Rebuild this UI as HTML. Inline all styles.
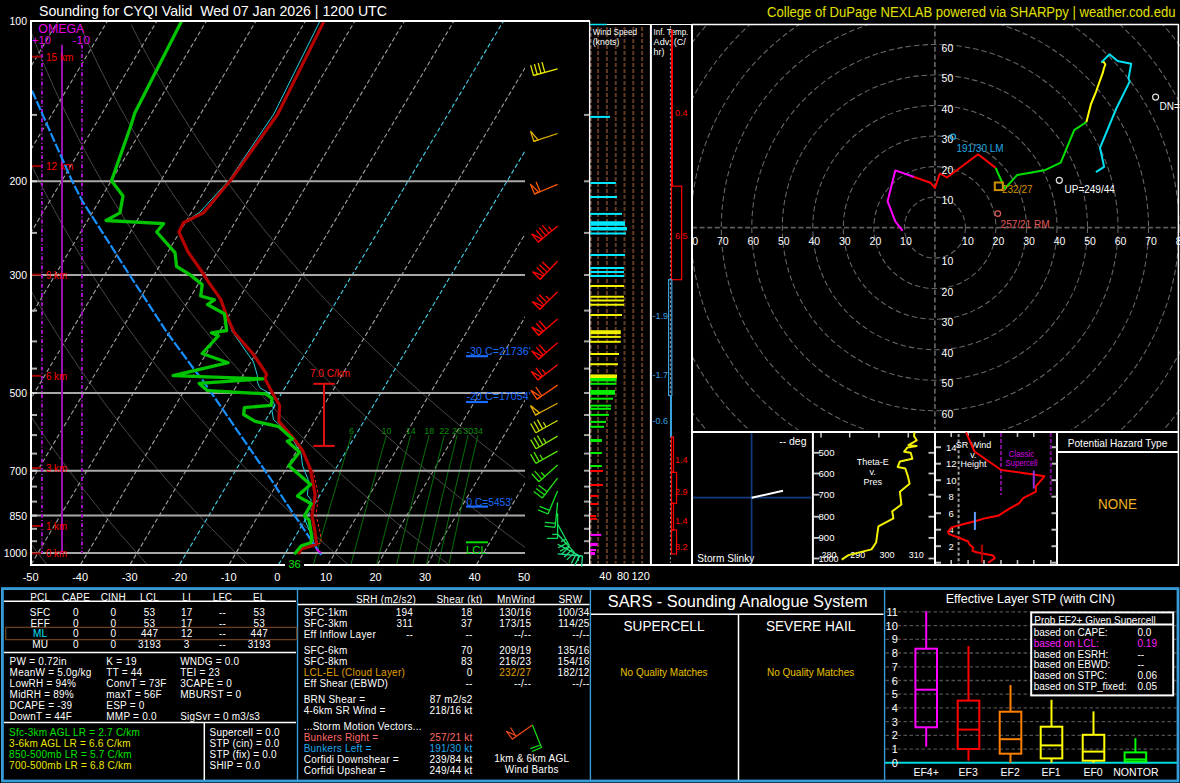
<!DOCTYPE html>
<html><head><meta charset="utf-8"><title>Sounding</title>
<style>html,body{margin:0;padding:0;background:#000;width:1180px;height:783px;overflow:hidden}
svg{display:block} text{font-family:"Liberation Sans",sans-serif;white-space:pre}</style></head>
<body><svg width="1180" height="783" viewBox="0 0 1180 783">
<rect width="1180" height="783" fill="#000"/>
<text x="39" y="16" fill="#fff" font-size="15" textLength="348" lengthAdjust="spacingAndGlyphs">Sounding for CYQI Valid  Wed 07 Jan 2026 | 1200 UTC</text>
<text x="767" y="17" fill="#e0e000" font-size="14" textLength="408.6" lengthAdjust="spacingAndGlyphs">College of DuPage NEXLAB powered via SHARPpy | weather.cod.edu</text>
<defs><clipPath id="skc"><rect x="32" y="22" width="493" height="542"/></clipPath><clipPath id="hodc"><rect x="693" y="25" width="487" height="405"/></clipPath></defs>
<g clip-path="url(#skc)">
<polyline points="46.8,564.5 42.1,558.5 37.4,552.5 32.8,546.5 28.3,540.5 23.8,534.5 19.4,528.5 15.1,522.5 10.8,516.5 6.5,510.5 2.4,504.5 -1.8,498.5 -5.8,492.5 -9.8,486.5 -13.8,480.5 -17.7,474.5 -21.5,468.5 -25.3,462.5 -29,456.5 -32.7,450.5 -36.3,444.5 -39.9,438.5 -43.4,432.5 -46.9,426.5 -50.3,420.5 -53.7,414.5 -57,408.5 -60.2,402.5 -63.5,396.5 -66.6,390.5 -69.7,384.5 -72.8,378.5 -75.8,372.5 -78.7,366.5 -81.7,360.5 -84.5,354.5 -87.3,348.5 -90.1,342.5 -92.8,336.5 -95.5,330.5 -98.1,324.5 -100.7,318.5 -103.3,312.5 -105.8,306.5 -108.2,300.5 -110.6,294.5 -113,288.5 -115.3,282.5 -117.6,276.5 -119.8,270.5 -122,264.5 -124.1,258.5 -126.2,252.5 -128.3,246.5 -130.3,240.5 -132.3,234.5 -134.2,228.5 -136.1,222.5 -137.9,216.5 -139.8,210.5 -141.5,204.5 -143.3,198.5 -145,192.5 -146.6,186.5 -148.2,180.5 -149.8,174.5 -151.3,168.5 -152.9,162.5 -154.3,156.5 -155.7,150.5 -157.1,144.5 -158.5,138.5 -159.8,132.5 -161.1,126.5 -162.3,120.5 -163.5,114.5 -164.7,108.5 -165.8,102.5 -167,96.5 -168,90.5 -169.1,84.5 -170.1,78.5 -171,72.5 -172,66.5 -172.9,60.5 -173.7,54.5 -174.6,48.5 -175.4,42.5 -176.1,36.5 -176.9,30.5 -177.6,24.5" fill="none" stroke="#484848" stroke-width="1" stroke-linejoin="round" />
<polyline points="147.2,564.5 141.8,558.5 136.4,552.5 131,546.5 125.8,540.5 120.6,534.5 115.5,528.5 110.4,522.5 105.4,516.5 100.5,510.5 95.6,504.5 90.8,498.5 86,492.5 81.3,486.5 76.7,480.5 72.1,474.5 67.6,468.5 63.2,462.5 58.8,456.5 54.5,450.5 50.2,444.5 46,438.5 41.8,432.5 37.7,426.5 33.7,420.5 29.7,414.5 25.8,408.5 21.9,402.5 18.1,396.5 14.3,390.5 10.6,384.5 7,378.5 3.4,372.5 -0.2,366.5 -3.7,360.5 -7.1,354.5 -10.5,348.5 -13.8,342.5 -17.1,336.5 -20.4,330.5 -23.5,324.5 -26.7,318.5 -29.8,312.5 -32.8,306.5 -35.8,300.5 -38.7,294.5 -41.6,288.5 -44.5,282.5 -47.3,276.5 -50,270.5 -52.7,264.5 -55.4,258.5 -58,252.5 -60.5,246.5 -63.1,240.5 -65.5,234.5 -68,228.5 -70.3,222.5 -72.7,216.5 -75,210.5 -77.2,204.5 -79.4,198.5 -81.6,192.5 -83.7,186.5 -85.8,180.5 -87.9,174.5 -89.9,168.5 -91.8,162.5 -93.7,156.5 -95.6,150.5 -97.4,144.5 -99.2,138.5 -101,132.5 -102.7,126.5 -104.4,120.5 -106,114.5 -107.6,108.5 -109.2,102.5 -110.7,96.5 -112.2,90.5 -113.6,84.5 -115,78.5 -116.4,72.5 -117.8,66.5 -119.1,60.5 -120.3,54.5 -121.6,48.5 -122.7,42.5 -123.9,36.5 -125,30.5 -126.1,24.5" fill="none" stroke="#484848" stroke-width="1" stroke-linejoin="round" />
<polyline points="247.6,564.5 241.4,558.5 235.3,552.5 229.2,546.5 223.2,540.5 217.3,534.5 211.5,528.5 205.7,522.5 200,516.5 194.4,510.5 188.8,504.5 183.3,498.5 177.9,492.5 172.5,486.5 167.2,480.5 162,474.5 156.8,468.5 151.7,462.5 146.6,456.5 141.7,450.5 136.7,444.5 131.9,438.5 127.1,432.5 122.4,426.5 117.7,420.5 113.1,414.5 108.6,408.5 104.1,402.5 99.7,396.5 95.3,390.5 91,384.5 86.7,378.5 82.5,372.5 78.4,366.5 74.3,360.5 70.3,354.5 66.4,348.5 62.4,342.5 58.6,336.5 54.8,330.5 51.1,324.5 47.4,318.5 43.7,312.5 40.1,306.5 36.6,300.5 33.1,294.5 29.7,288.5 26.4,282.5 23,276.5 19.8,270.5 16.5,264.5 13.4,258.5 10.3,252.5 7.2,246.5 4.2,240.5 1.2,234.5 -1.7,228.5 -4.6,222.5 -7.4,216.5 -10.2,210.5 -12.9,204.5 -15.6,198.5 -18.3,192.5 -20.9,186.5 -23.4,180.5 -25.9,174.5 -28.4,168.5 -30.8,162.5 -33.1,156.5 -35.5,150.5 -37.7,144.5 -40,138.5 -42.2,132.5 -44.3,126.5 -46.4,120.5 -48.5,114.5 -50.5,108.5 -52.5,102.5 -54.5,96.5 -56.4,90.5 -58.2,84.5 -60,78.5 -61.8,72.5 -63.6,66.5 -65.3,60.5 -66.9,54.5 -68.5,48.5 -70.1,42.5 -71.7,36.5 -73.2,30.5 -74.7,24.5" fill="none" stroke="#484848" stroke-width="1" stroke-linejoin="round" />
<polyline points="348,564.5 341.1,558.5 334.2,552.5 327.4,546.5 320.7,540.5 314.1,534.5 307.5,528.5 301,522.5 294.6,516.5 288.3,510.5 282,504.5 275.8,498.5 269.7,492.5 263.7,486.5 257.7,480.5 251.8,474.5 245.9,468.5 240.2,462.5 234.5,456.5 228.9,450.5 223.3,444.5 217.8,438.5 212.4,432.5 207,426.5 201.7,420.5 196.5,414.5 191.3,408.5 186.2,402.5 181.2,396.5 176.2,390.5 171.3,384.5 166.5,378.5 161.7,372.5 157,366.5 152.3,360.5 147.7,354.5 143.2,348.5 138.7,342.5 134.3,336.5 129.9,330.5 125.6,324.5 121.4,318.5 117.2,312.5 113.1,306.5 109,300.5 105,294.5 101.1,288.5 97.2,282.5 93.3,276.5 89.5,270.5 85.8,264.5 82.1,258.5 78.5,252.5 74.9,246.5 71.4,240.5 67.9,234.5 64.5,228.5 61.1,222.5 57.8,216.5 54.6,210.5 51.4,204.5 48.2,198.5 45.1,192.5 42,186.5 39,180.5 36.1,174.5 33.1,168.5 30.3,162.5 27.4,156.5 24.7,150.5 22,144.5 19.3,138.5 16.6,132.5 14.1,126.5 11.5,120.5 9,114.5 6.6,108.5 4.2,102.5 1.8,96.5 -0.5,90.5 -2.8,84.5 -5,78.5 -7.2,72.5 -9.4,66.5 -11.5,60.5 -13.5,54.5 -15.5,48.5 -17.5,42.5 -19.5,36.5 -21.4,30.5 -23.2,24.5" fill="none" stroke="#484848" stroke-width="1" stroke-linejoin="round" />
<polyline points="448.4,564.5 440.7,558.5 433.1,552.5 425.6,546.5 418.2,540.5 410.8,534.5 403.5,528.5 396.3,522.5 389.2,516.5 382.2,510.5 375.2,504.5 368.4,498.5 361.5,492.5 354.8,486.5 348.2,480.5 341.6,474.5 335.1,468.5 328.7,462.5 322.3,456.5 316,450.5 309.8,444.5 303.7,438.5 297.6,432.5 291.7,426.5 285.7,420.5 279.9,414.5 274.1,408.5 268.4,402.5 262.8,396.5 257.2,390.5 251.7,384.5 246.2,378.5 240.9,372.5 235.6,366.5 230.3,360.5 225.2,354.5 220,348.5 215,342.5 210,336.5 205.1,330.5 200.2,324.5 195.5,318.5 190.7,312.5 186.1,306.5 181.4,300.5 176.9,294.5 172.4,288.5 168,282.5 163.6,276.5 159.3,270.5 155.1,264.5 150.9,258.5 146.7,252.5 142.6,246.5 138.6,240.5 134.7,234.5 130.7,228.5 126.9,222.5 123.1,216.5 119.4,210.5 115.7,204.5 112,198.5 108.4,192.5 104.9,186.5 101.4,180.5 98,174.5 94.6,168.5 91.3,162.5 88,156.5 84.8,150.5 81.6,144.5 78.5,138.5 75.5,132.5 72.4,126.5 69.5,120.5 66.5,114.5 63.7,108.5 60.8,102.5 58,96.5 55.3,90.5 52.6,84.5 50,78.5 47.4,72.5 44.8,66.5 42.3,60.5 39.9,54.5 37.5,48.5 35.1,42.5 32.8,36.5 30.5,30.5 28.2,24.5" fill="none" stroke="#484848" stroke-width="1" stroke-linejoin="round" />
<polyline points="548.8,564.5 540.4,558.5 532.1,552.5 523.8,546.5 515.6,540.5 507.6,534.5 499.6,528.5 491.7,522.5 483.8,516.5 476.1,510.5 468.5,504.5 460.9,498.5 453.4,492.5 446,486.5 438.7,480.5 431.4,474.5 424.3,468.5 417.2,462.5 410.2,456.5 403.2,450.5 396.4,444.5 389.6,438.5 382.9,432.5 376.3,426.5 369.7,420.5 363.3,414.5 356.9,408.5 350.6,402.5 344.3,396.5 338.1,390.5 332,384.5 326,378.5 320,372.5 314.1,366.5 308.3,360.5 302.6,354.5 296.9,348.5 291.3,342.5 285.7,336.5 280.3,330.5 274.8,324.5 269.5,318.5 264.2,312.5 259,306.5 253.9,300.5 248.8,294.5 243.8,288.5 238.8,282.5 233.9,276.5 229.1,270.5 224.3,264.5 219.6,258.5 215,252.5 210.4,246.5 205.9,240.5 201.4,234.5 197,228.5 192.6,222.5 188.4,216.5 184.1,210.5 180,204.5 175.8,198.5 171.8,192.5 167.8,186.5 163.8,180.5 160,174.5 156.1,168.5 152.3,162.5 148.6,156.5 145,150.5 141.3,144.5 137.8,138.5 134.3,132.5 130.8,126.5 127.4,120.5 124.1,114.5 120.7,108.5 117.5,102.5 114.3,96.5 111.1,90.5 108,84.5 105,78.5 102,72.5 99,66.5 96.1,60.5 93.3,54.5 90.5,48.5 87.7,42.5 85,36.5 82.3,30.5 79.7,24.5" fill="none" stroke="#484848" stroke-width="1" stroke-linejoin="round" />
<polyline points="649.3,564.5 640.1,558.5 631,552.5 622,546.5 613.1,540.5 604.3,534.5 595.6,528.5 587,522.5 578.5,516.5 570,510.5 561.7,504.5 553.4,498.5 545.2,492.5 537.2,486.5 529.2,480.5 521.2,474.5 513.4,468.5 505.7,462.5 498,456.5 490.4,450.5 482.9,444.5 475.5,438.5 468.2,432.5 460.9,426.5 453.8,420.5 446.7,414.5 439.7,408.5 432.7,402.5 425.9,396.5 419.1,390.5 412.4,384.5 405.7,378.5 399.2,372.5 392.7,366.5 386.3,360.5 380,354.5 373.7,348.5 367.6,342.5 361.4,336.5 355.4,330.5 349.4,324.5 343.5,318.5 337.7,312.5 332,306.5 326.3,300.5 320.7,294.5 315.1,288.5 309.6,282.5 304.2,276.5 298.9,270.5 293.6,264.5 288.3,258.5 283.2,252.5 278.1,246.5 273.1,240.5 268.1,234.5 263.2,228.5 258.4,222.5 253.6,216.5 248.9,210.5 244.3,204.5 239.7,198.5 235.1,192.5 230.7,186.5 226.3,180.5 221.9,174.5 217.6,168.5 213.4,162.5 209.2,156.5 205.1,150.5 201,144.5 197,138.5 193.1,132.5 189.2,126.5 185.4,120.5 181.6,114.5 177.8,108.5 174.2,102.5 170.5,96.5 167,90.5 163.5,84.5 160,78.5 156.6,72.5 153.2,66.5 149.9,60.5 146.7,54.5 143.5,48.5 140.3,42.5 137.2,36.5 134.2,30.5 131.2,24.5" fill="none" stroke="#484848" stroke-width="1" stroke-linejoin="round" />
<line x1="-513.4" y1="564.5" x2="-189.5" y2="21" stroke="#a0a0a0" stroke-width="1.1" stroke-dasharray="4.5 2.5"/>
<line x1="-463.9" y1="564.5" x2="-140" y2="21" stroke="#a0a0a0" stroke-width="1.1" stroke-dasharray="4.5 2.5"/>
<line x1="-414.4" y1="564.5" x2="-90.5" y2="21" stroke="#a0a0a0" stroke-width="1.1" stroke-dasharray="4.5 2.5"/>
<line x1="-364.9" y1="564.5" x2="-41" y2="21" stroke="#a0a0a0" stroke-width="1.1" stroke-dasharray="4.5 2.5"/>
<line x1="-315.4" y1="564.5" x2="8.5" y2="21" stroke="#a0a0a0" stroke-width="1.1" stroke-dasharray="4.5 2.5"/>
<line x1="-265.9" y1="564.5" x2="58" y2="21" stroke="#a0a0a0" stroke-width="1.1" stroke-dasharray="4.5 2.5"/>
<line x1="-216.4" y1="564.5" x2="107.5" y2="21" stroke="#a0a0a0" stroke-width="1.1" stroke-dasharray="4.5 2.5"/>
<line x1="-166.9" y1="564.5" x2="157" y2="21" stroke="#a0a0a0" stroke-width="1.1" stroke-dasharray="4.5 2.5"/>
<line x1="-117.4" y1="564.5" x2="206.5" y2="21" stroke="#a0a0a0" stroke-width="1.1" stroke-dasharray="4.5 2.5"/>
<line x1="-67.9" y1="564.5" x2="256" y2="21" stroke="#a0a0a0" stroke-width="1.1" stroke-dasharray="4.5 2.5"/>
<line x1="-18.4" y1="564.5" x2="305.5" y2="21" stroke="#a0a0a0" stroke-width="1.1" stroke-dasharray="4.5 2.5"/>
<line x1="31.1" y1="564.5" x2="355" y2="21" stroke="#a0a0a0" stroke-width="1.1" stroke-dasharray="4.5 2.5"/>
<line x1="80.6" y1="564.5" x2="404.5" y2="21" stroke="#a0a0a0" stroke-width="1.1" stroke-dasharray="4.5 2.5"/>
<line x1="130.1" y1="564.5" x2="454" y2="21" stroke="#a0a0a0" stroke-width="1.1" stroke-dasharray="4.5 2.5"/>
<line x1="179.6" y1="564.5" x2="503.5" y2="21" stroke="#48d0e8" stroke-width="1.1" stroke-dasharray="4.5 2.5"/>
<line x1="229.1" y1="564.5" x2="553" y2="21" stroke="#a0a0a0" stroke-width="1.1" stroke-dasharray="4.5 2.5"/>
<line x1="278.6" y1="564.5" x2="602.5" y2="21" stroke="#48d0e8" stroke-width="1.1" stroke-dasharray="4.5 2.5"/>
<line x1="328.1" y1="564.5" x2="652" y2="21" stroke="#a0a0a0" stroke-width="1.1" stroke-dasharray="4.5 2.5"/>
<line x1="377.6" y1="564.5" x2="701.5" y2="21" stroke="#a0a0a0" stroke-width="1.1" stroke-dasharray="4.5 2.5"/>
<line x1="427.1" y1="564.5" x2="751" y2="21" stroke="#a0a0a0" stroke-width="1.1" stroke-dasharray="4.5 2.5"/>
<line x1="476.6" y1="564.5" x2="800.5" y2="21" stroke="#a0a0a0" stroke-width="1.1" stroke-dasharray="4.5 2.5"/>
<line x1="526.1" y1="564.5" x2="850" y2="21" stroke="#a0a0a0" stroke-width="1.1" stroke-dasharray="4.5 2.5"/>
<polyline points="351.4,435.1 340.7,470.7 331.6,501.6 323.6,528.8 316.7,553.1 313.4,564.5" fill="none" stroke="#087008" stroke-width="1" stroke-linejoin="round" />
<polyline points="386.5,435.1 376.5,470.7 367.9,501.6 360.5,528.8 354,553.1 350.9,564.5" fill="none" stroke="#087008" stroke-width="1" stroke-linejoin="round" />
<polyline points="410.7,435.1 401.1,470.7 392.9,501.6 385.8,528.8 379.6,553.1 376.8,564.5" fill="none" stroke="#087008" stroke-width="1" stroke-linejoin="round" />
<polyline points="429.2,435.1 419.9,470.7 412.1,501.6 405.3,528.8 399.4,553.1 396.6,564.5" fill="none" stroke="#087008" stroke-width="1" stroke-linejoin="round" />
<polyline points="444.3,435.1 435.3,470.7 427.7,501.6 421.2,528.8 415.4,553.1 412.8,564.5" fill="none" stroke="#087008" stroke-width="1" stroke-linejoin="round" />
<polyline points="457.1,435.1 448.4,470.7 441,501.6 434.6,528.8 429.1,553.1 426.5,564.5" fill="none" stroke="#087008" stroke-width="1" stroke-linejoin="round" />
<polyline points="468.2,435.1 459.6,470.7 452.4,501.6 446.3,528.8 440.9,553.1 438.4,564.5" fill="none" stroke="#087008" stroke-width="1" stroke-linejoin="round" />
<polyline points="478,435.1 469.6,470.7 462.6,501.6 456.6,528.8 451.3,553.1 448.9,564.5" fill="none" stroke="#087008" stroke-width="1" stroke-linejoin="round" />
</g>
<text x="351.4" y="434" fill="#0a8a0a" font-size="9" text-anchor="middle" >6</text>
<text x="386.5" y="434" fill="#0a8a0a" font-size="9" text-anchor="middle" >10</text>
<text x="410.7" y="434" fill="#0a8a0a" font-size="9" text-anchor="middle" >14</text>
<text x="429.2" y="434" fill="#0a8a0a" font-size="9" text-anchor="middle" >18</text>
<text x="444.3" y="434" fill="#0a8a0a" font-size="9" text-anchor="middle" >22</text>
<text x="457.1" y="434" fill="#0a8a0a" font-size="9" text-anchor="middle" >26</text>
<text x="468.2" y="434" fill="#0a8a0a" font-size="9" text-anchor="middle" >30</text>
<text x="478" y="434" fill="#0a8a0a" font-size="9" text-anchor="middle" >34</text>
<line x1="32" y1="181.3" x2="525" y2="181.3" stroke="#a8a8a8" stroke-width="2" />
<line x1="32" y1="275" x2="525" y2="275" stroke="#a8a8a8" stroke-width="2" />
<line x1="32" y1="393" x2="525" y2="393" stroke="#a8a8a8" stroke-width="2" />
<line x1="32" y1="470.7" x2="525" y2="470.7" stroke="#a8a8a8" stroke-width="2" />
<line x1="32" y1="515.6" x2="525" y2="515.6" stroke="#a8a8a8" stroke-width="2" />
<line x1="32" y1="553.1" x2="525" y2="553.1" stroke="#a8a8a8" stroke-width="2" />
<line x1="32" y1="114.9" x2="37" y2="114.9" stroke="#b0b0b0" stroke-width="2" />
<line x1="32" y1="181.3" x2="37" y2="181.3" stroke="#d0d0d0" stroke-width="2" />
<line x1="32" y1="232.9" x2="37" y2="232.9" stroke="#b0b0b0" stroke-width="2" />
<line x1="32" y1="275" x2="37" y2="275" stroke="#d0d0d0" stroke-width="2" />
<line x1="32" y1="310.6" x2="37" y2="310.6" stroke="#b0b0b0" stroke-width="2" />
<line x1="32" y1="341.4" x2="37" y2="341.4" stroke="#b0b0b0" stroke-width="2" />
<line x1="32" y1="368.6" x2="37" y2="368.6" stroke="#b0b0b0" stroke-width="2" />
<line x1="32" y1="393" x2="37" y2="393" stroke="#d0d0d0" stroke-width="2" />
<line x1="32" y1="415" x2="37" y2="415" stroke="#b0b0b0" stroke-width="2" />
<line x1="32" y1="435.1" x2="37" y2="435.1" stroke="#b0b0b0" stroke-width="2" />
<line x1="32" y1="453.6" x2="37" y2="453.6" stroke="#b0b0b0" stroke-width="2" />
<line x1="32" y1="470.7" x2="37" y2="470.7" stroke="#d0d0d0" stroke-width="2" />
<line x1="32" y1="486.6" x2="37" y2="486.6" stroke="#b0b0b0" stroke-width="2" />
<line x1="32" y1="501.6" x2="37" y2="501.6" stroke="#b0b0b0" stroke-width="2" />
<line x1="32" y1="515.6" x2="37" y2="515.6" stroke="#d0d0d0" stroke-width="2" />
<line x1="32" y1="528.8" x2="37" y2="528.8" stroke="#b0b0b0" stroke-width="2" />
<line x1="32" y1="541.2" x2="37" y2="541.2" stroke="#b0b0b0" stroke-width="2" />
<line x1="32" y1="553.1" x2="37" y2="553.1" stroke="#d0d0d0" stroke-width="2" />
<line x1="584" y1="114.9" x2="589" y2="114.9" stroke="#a0a0a0" stroke-width="2" />
<line x1="584" y1="181.3" x2="589" y2="181.3" stroke="#a0a0a0" stroke-width="2" />
<line x1="584" y1="232.9" x2="589" y2="232.9" stroke="#a0a0a0" stroke-width="2" />
<line x1="584" y1="275" x2="589" y2="275" stroke="#a0a0a0" stroke-width="2" />
<line x1="584" y1="310.6" x2="589" y2="310.6" stroke="#a0a0a0" stroke-width="2" />
<line x1="584" y1="341.4" x2="589" y2="341.4" stroke="#a0a0a0" stroke-width="2" />
<line x1="584" y1="368.6" x2="589" y2="368.6" stroke="#a0a0a0" stroke-width="2" />
<line x1="584" y1="393" x2="589" y2="393" stroke="#a0a0a0" stroke-width="2" />
<line x1="584" y1="415" x2="589" y2="415" stroke="#a0a0a0" stroke-width="2" />
<line x1="584" y1="435.1" x2="589" y2="435.1" stroke="#a0a0a0" stroke-width="2" />
<line x1="584" y1="453.6" x2="589" y2="453.6" stroke="#a0a0a0" stroke-width="2" />
<line x1="584" y1="470.7" x2="589" y2="470.7" stroke="#a0a0a0" stroke-width="2" />
<line x1="584" y1="486.6" x2="589" y2="486.6" stroke="#a0a0a0" stroke-width="2" />
<line x1="584" y1="501.6" x2="589" y2="501.6" stroke="#a0a0a0" stroke-width="2" />
<line x1="584" y1="515.6" x2="589" y2="515.6" stroke="#a0a0a0" stroke-width="2" />
<line x1="584" y1="528.8" x2="589" y2="528.8" stroke="#a0a0a0" stroke-width="2" />
<line x1="584" y1="541.2" x2="589" y2="541.2" stroke="#a0a0a0" stroke-width="2" />
<line x1="584" y1="553.1" x2="589" y2="553.1" stroke="#a0a0a0" stroke-width="2" />
<text x="27" y="25.2" fill="#fff" font-size="10.5" text-anchor="end" >100</text>
<text x="27" y="185.3" fill="#fff" font-size="10.5" text-anchor="end" >200</text>
<text x="27" y="279" fill="#fff" font-size="10.5" text-anchor="end" >300</text>
<text x="27" y="397" fill="#fff" font-size="10.5" text-anchor="end" >500</text>
<text x="27" y="474.7" fill="#fff" font-size="10.5" text-anchor="end" >700</text>
<text x="27" y="519.6" fill="#fff" font-size="10.5" text-anchor="end" >850</text>
<text x="27" y="557.1" fill="#fff" font-size="10.5" text-anchor="end" >1000</text>
<text x="30.6" y="581.2" fill="#fff" font-size="11" text-anchor="middle" >-50</text>
<text x="80.1" y="581.2" fill="#fff" font-size="11" text-anchor="middle" >-40</text>
<text x="129.6" y="581.2" fill="#fff" font-size="11" text-anchor="middle" >-30</text>
<text x="179.1" y="581.2" fill="#fff" font-size="11" text-anchor="middle" >-20</text>
<text x="228.6" y="581.2" fill="#fff" font-size="11" text-anchor="middle" >-10</text>
<text x="277.3" y="581.2" fill="#fff" font-size="11" text-anchor="middle" >0</text>
<text x="326.1" y="581.2" fill="#fff" font-size="11" text-anchor="middle" >10</text>
<text x="375.6" y="581.2" fill="#fff" font-size="11" text-anchor="middle" >20</text>
<text x="425.1" y="581.2" fill="#fff" font-size="11" text-anchor="middle" >30</text>
<text x="474.6" y="581.2" fill="#fff" font-size="11" text-anchor="middle" >40</text>
<text x="524.1" y="581.2" fill="#fff" font-size="11" text-anchor="middle" >50</text>
<g>
<line x1="62" y1="44.7" x2="62" y2="553" stroke="#9a10b0" stroke-width="2" />
<line x1="42" y1="44.7" x2="42" y2="553" stroke="#a010c0" stroke-width="2" stroke-dasharray="3.9 2.2 1 2.1"/>
<line x1="82" y1="44.7" x2="82" y2="553" stroke="#a010c0" stroke-width="2" stroke-dasharray="3.9 2.2 1 2.1"/>
<text x="38.3" y="33" fill="#e800e8" font-size="12" text-anchor="start" textLength="46" lengthAdjust="spacingAndGlyphs" >OMEGA</text>
<text x="32" y="44" fill="#e800e8" font-size="11" text-anchor="start" textLength="19" lengthAdjust="spacingAndGlyphs" >+10</text>
<text x="72.2" y="44" fill="#e800e8" font-size="11" text-anchor="start" textLength="17.9" lengthAdjust="spacingAndGlyphs" >-10</text>
</g>
<line x1="32" y1="56.7" x2="41" y2="56.7" stroke="#a00000" stroke-width="2" />
<text x="46" y="60.7" fill="#ff0000" font-size="10.5" text-anchor="start" textLength="27.5" lengthAdjust="spacingAndGlyphs" >15 km</text>
<line x1="32" y1="166.1" x2="41" y2="166.1" stroke="#a00000" stroke-width="2" />
<text x="46" y="170.1" fill="#ff0000" font-size="10.5" text-anchor="start" textLength="27.5" lengthAdjust="spacingAndGlyphs" >12 km</text>
<line x1="32" y1="274.6" x2="41" y2="274.6" stroke="#a00000" stroke-width="2" />
<text x="46" y="278.6" fill="#ff0000" font-size="10.5" text-anchor="start" textLength="21" lengthAdjust="spacingAndGlyphs" >9 km</text>
<line x1="32" y1="375.8" x2="41" y2="375.8" stroke="#a00000" stroke-width="2" />
<text x="46" y="379.8" fill="#ff0000" font-size="10.5" text-anchor="start" textLength="21" lengthAdjust="spacingAndGlyphs" >6 km</text>
<line x1="32" y1="468" x2="41" y2="468" stroke="#a00000" stroke-width="2" />
<text x="46" y="472" fill="#ff0000" font-size="10.5" text-anchor="start" textLength="21" lengthAdjust="spacingAndGlyphs" >3 km</text>
<line x1="32" y1="526" x2="41" y2="526" stroke="#a00000" stroke-width="2" />
<text x="46" y="530" fill="#ff0000" font-size="10.5" text-anchor="start" textLength="21" lengthAdjust="spacingAndGlyphs" >1 km</text>
<line x1="32" y1="553.4" x2="41" y2="553.4" stroke="#a00000" stroke-width="2" />
<text x="46" y="557.4" fill="#ff0000" font-size="10.5" text-anchor="start" textLength="21" lengthAdjust="spacingAndGlyphs" >0 km</text>
<polyline points="32,90.7 71.6,180 81.7,200 129,274.1 167.3,332.9 195.5,371.2 202.5,380 271.4,480 284.2,500 321.2,555" fill="none" stroke="#1890ff" stroke-width="2.2" stroke-linejoin="round" stroke-dasharray="9.5 2.1"/>
<polyline points="319.7,21.6 273.8,114 229.2,180 200,212 183.5,222.8 178.9,232 188.1,252 206.5,280 220.6,299.1 226.7,316 232,331.3 253.5,362 257.4,375.7 257.4,381.9 259.7,387.7 268.9,393 275,406 272,410.6 273.5,419.8 281.1,426 293.4,440.5 301,453.6 302.6,465.8 308.7,481 307.4,495.3 311.3,500 304.4,518.3 313.6,541.3 308,548" fill="none" stroke="#20d0e0" stroke-width="1" stroke-linejoin="round" />
<polyline points="313,470 318.5,495.3 316,515.2 320,532 321.5,542.8 303,549" fill="none" stroke="#ff2020" stroke-width="1" stroke-linejoin="round" stroke-dasharray="3 2"/>
<polyline points="323.8,21.6 277.8,114 230.8,180 229.5,181.5 203.4,212.9 183.5,222.8 178.9,232 188.1,252 200.7,270 209.8,283.8 220.6,299.1 226.7,316 234.4,332.8 252.8,353.5 266.6,374.2 265,378.8 272,392.3 279.6,405.3 278.9,421.4 293.4,438.2 302.6,450.5 310.3,468.9 314.9,493.4 315.1,495.3 312,515.2 315.1,532.1 316.6,544.4 301.3,549 298.2,554.3" fill="none" stroke="#b40000" stroke-width="3.2" stroke-linejoin="round" />
<polyline points="181.4,21.6 134.8,113 130.7,126.3 111.5,180.7 123,196 119.9,212.9 106.1,220.5 163.6,223.6 156.7,232 175,252.7 176.6,266.5 189.9,274.6 202.2,284.6 200.7,296 214.4,299.9 207.5,304.5 224.4,313.7 226.7,330.5 211.4,332.8 218.3,335.9 202.2,353.5 228.2,362.7 173.1,375.7 262.7,378.8 199.1,383.4 207.6,390.7 265.8,393.8 272,398.4 271.2,405.3 244.4,407.6 243.6,414.5 255.1,421.4 278.9,426.7 292.6,439 287.3,441.3 299.5,452 288.8,465.8 310.5,484.6 297.5,496.1 311.3,503.8 304.4,516 309,519.8 312,538.2 310.5,542.8 301.3,545.9 294.4,554.3" fill="none" stroke="#00c400" stroke-width="3.3" stroke-linejoin="round" />
<line x1="316" y1="549" x2="321" y2="553" stroke="#e000e0" stroke-width="2" />
<line x1="313.3" y1="383.8" x2="334.8" y2="383.8" stroke="#e01010" stroke-width="2" />
<line x1="324" y1="383.8" x2="324" y2="445.9" stroke="#e01010" stroke-width="2" />
<line x1="313.3" y1="445.9" x2="334.8" y2="445.9" stroke="#e01010" stroke-width="2" />
<text x="330" y="377" fill="#ff1a1a" font-size="10" text-anchor="middle" >7.0 C/km</text>
<text x="466.5" y="355.2" fill="#1a6cff" font-size="10.5" text-anchor="start" textLength="64.2" lengthAdjust="spacingAndGlyphs" >-30 C=21736'</text>
<line x1="466" y1="356.2" x2="488" y2="356.2" stroke="#1a6cff" stroke-width="2.2" />
<text x="466.5" y="400.3" fill="#1a6cff" font-size="10.5" text-anchor="start" textLength="64.2" lengthAdjust="spacingAndGlyphs" >-20 C=17054'</text>
<line x1="466" y1="402" x2="488" y2="402" stroke="#1a6cff" stroke-width="2.2" />
<text x="466.5" y="505.8" fill="#1a6cff" font-size="10.5" text-anchor="start" textLength="46.3" lengthAdjust="spacingAndGlyphs" >0 C=5453'</text>
<line x1="466" y1="506.6" x2="488" y2="506.6" stroke="#1a6cff" stroke-width="2.2" />
<line x1="466" y1="542.3" x2="488" y2="542.3" stroke="#00e000" stroke-width="2" />
<text x="466" y="554" fill="#00e000" font-size="11" text-anchor="start" textLength="20.7" lengthAdjust="spacingAndGlyphs" >LCL</text>
<polyline points="31,565 31,21 590,21" fill="none" stroke="#fff" stroke-width="2"/>
<line x1="30" y1="565" x2="285" y2="565" stroke="#fff" stroke-width="2" />
<line x1="304" y1="565" x2="590" y2="565" stroke="#fff" stroke-width="2" />
<text x="294.5" y="568" fill="#00e000" font-size="11" text-anchor="middle" >36</text>
<path d="M557.6,68.9L533.5,75.5M533.5,75.5l-2.8,-10.3M537.2,74.5l-2.8,-10.3M541,73.4l-2.8,-10.3M544.8,72.4l-2.8,-10.3" stroke="#e6e600" stroke-width="1.3" fill="none"/>
<path d="M557.6,133.5L533.8,141.3" stroke="#e6b000" stroke-width="1.3" fill="none"/>
<path d="M533.8,141.3L530.5,131.1L538.1,139.9Z" stroke="#e6b000" stroke-width="1.3" fill="none" stroke-linejoin="miter"/>
<path d="M557.6,184.3L534.5,194M540.1,191.6l-4.1,-9.9" stroke="#ff5a00" stroke-width="1.3" fill="none"/>
<path d="M534.5,194L530.4,184.1L538.7,192.2Z" stroke="#ff5a00" stroke-width="1.3" fill="none" stroke-linejoin="miter"/>
<path d="M557.6,226.1L538.4,242.1M543,238.3l-6.8,-8.2M546,235.8l-6.8,-8.2M549,233.3l-6.8,-8.2M552,230.8l-3.4,-4.1" stroke="#ff0000" stroke-width="1.3" fill="none"/>
<path d="M538.4,242.1L531.5,233.9L541.8,239.2Z" stroke="#ff0000" stroke-width="1.3" fill="none" stroke-linejoin="miter"/>
<path d="M557.6,261.2L540.2,279.2M544.4,274.9l-7.7,-7.4M547.1,272.1l-7.7,-7.4M549.8,269.2l-7.7,-7.4" stroke="#ff0000" stroke-width="1.3" fill="none"/>
<path d="M540.2,279.2L532.5,271.7L543.3,275.9Z" stroke="#ff0000" stroke-width="1.3" fill="none" stroke-linejoin="miter"/>
<path d="M557.6,291.8L539.8,309.3M544.1,305.1l-7.5,-7.6M546.8,302.4l-7.5,-7.6M549.6,299.7l-3.8,-3.8" stroke="#ff0000" stroke-width="1.3" fill="none"/>
<path d="M539.8,309.3L532.3,301.7L543,306.2Z" stroke="#ff0000" stroke-width="1.3" fill="none" stroke-linejoin="miter"/>
<path d="M557.6,318.9L538.7,335.3M543.3,331.4l-7,-8.1M546.2,328.8l-7,-8.1" stroke="#ff0000" stroke-width="1.3" fill="none"/>
<path d="M538.7,335.3L531.7,327.2L542.1,332.3Z" stroke="#ff0000" stroke-width="1.3" fill="none" stroke-linejoin="miter"/>
<path d="M557.6,342.8L538.7,359.1M543.2,355.2l-7,-8.1M546.2,352.7l-7,-8.1" stroke="#ff0000" stroke-width="1.3" fill="none"/>
<path d="M538.7,359.1L531.7,351L542.1,356.2Z" stroke="#ff0000" stroke-width="1.3" fill="none" stroke-linejoin="miter"/>
<path d="M557.6,364.7L537.8,379.9M542.5,376.3l-6.5,-8.5M545.6,373.9l-3.3,-4.2" stroke="#ff1000" stroke-width="1.3" fill="none"/>
<path d="M537.8,379.9L531.3,371.5L541.4,377.2Z" stroke="#ff1000" stroke-width="1.3" fill="none" stroke-linejoin="miter"/>
<path d="M557.6,385.1L537,399.2M541.9,395.8l-6.1,-8.8" stroke="#ff5000" stroke-width="1.3" fill="none"/>
<path d="M537,399.2L530.9,390.4L540.7,396.7Z" stroke="#ff5000" stroke-width="1.3" fill="none" stroke-linejoin="miter"/>
<path d="M557.6,403.3L535.5,415" stroke="#e6b000" stroke-width="1.3" fill="none"/>
<path d="M535.5,415L530.5,405.6L539.5,412.9Z" stroke="#e6b000" stroke-width="1.3" fill="none" stroke-linejoin="miter"/>
<path d="M557.6,420.5L535.8,432.8M535.8,432.8l-5.2,-9.3M539.2,430.8l-5.2,-9.3M542.6,428.9l-5.2,-9.3M546,427l-2.6,-4.7" stroke="#c8e000" stroke-width="1.3" fill="none"/>
<path d="M557.6,436.1L536.1,448.8M536.1,448.8l-5.4,-9.2M539.4,446.8l-5.4,-9.2M542.8,444.8l-5.4,-9.2M546.1,442.9l-2.7,-4.6" stroke="#80e000" stroke-width="1.3" fill="none"/>
<path d="M557.6,451.1L535.8,463.4M535.8,463.4l-5.2,-9.3M539.2,461.4l-5.2,-9.3M542.6,459.5l-2.6,-4.7" stroke="#50e000" stroke-width="1.3" fill="none"/>
<path d="M557.6,465.1L538.9,481.7M538.9,481.7l-7.1,-8M541.8,479.1l-7.1,-8M544.8,476.5l-3.6,-4" stroke="#30e000" stroke-width="1.3" fill="none"/>
<path d="M557.6,478.2L542.3,498M542.3,498l-8.5,-6.5M544.7,494.9l-8.5,-6.5M547.1,491.8l-8.5,-6.5" stroke="#20e010" stroke-width="1.3" fill="none"/>
<path d="M557.6,490.9L548,514M548,514l-9.9,-4.1M549.5,510.4l-9.9,-4.1" stroke="#10e020" stroke-width="1.3" fill="none"/>
<path d="M557.6,502.4L555.1,527.3M555.1,527.3l-10.6,-1.1M555.5,523.4l-10.6,-1.1" stroke="#10e040" stroke-width="1.3" fill="none"/>
<path d="M557.6,513.3L557.6,538.3M557.6,538.3l-10.7,0M557.6,534.4l-5.3,0" stroke="#10e050" stroke-width="1.3" fill="none"/>
<path d="M557.6,524L569.5,546M569.5,546l-9.4,5.1M567.6,542.6l-9.4,5.1M565.8,539.1l-4.7,2.5" stroke="#10e060" stroke-width="1.3" fill="none"/>
<path d="M557.6,534.3L574.6,552.6M574.6,552.6l-7.8,7.3M572,549.7l-7.8,7.3M569.3,546.9l-7.8,7.3" stroke="#20e070" stroke-width="1.3" fill="none"/>
<path d="M557.6,544.2L579.7,555.9M579.7,555.9l-5,9.5M576.3,554l-5,9.5" stroke="#20e080" stroke-width="1.3" fill="none"/>
<path d="M557.6,553.8L582.5,556M582.5,556l-0.9,10.7M578.6,555.6l-0.5,5.3" stroke="#20e090" stroke-width="1.3" fill="none"/>
<line x1="589.6" y1="21" x2="589.6" y2="565" stroke="#fff" stroke-width="1.3" />
<line x1="590.8" y1="26.9" x2="590.8" y2="564" stroke="#d8a890" stroke-width="1" stroke-dasharray="4 2"/>
<line x1="598.1" y1="26.9" x2="598.1" y2="563.5" stroke="#623a22" stroke-width="2" stroke-dasharray="4 2"/>
<line x1="606.9" y1="26.9" x2="606.9" y2="563.5" stroke="#623a22" stroke-width="2" stroke-dasharray="4 2"/>
<line x1="615.7" y1="26.9" x2="615.7" y2="563.5" stroke="#623a22" stroke-width="2" stroke-dasharray="4 2"/>
<line x1="624.5" y1="26.9" x2="624.5" y2="563.5" stroke="#623a22" stroke-width="2" stroke-dasharray="4 2"/>
<line x1="633.3" y1="26.9" x2="633.3" y2="563.5" stroke="#623a22" stroke-width="2" stroke-dasharray="4 2"/>
<line x1="642.1" y1="26.9" x2="642.1" y2="563.5" stroke="#623a22" stroke-width="2" stroke-dasharray="4 2"/>
<line x1="590" y1="24.5" x2="651" y2="24.5" stroke="#fff" stroke-width="1.2" />
<line x1="650.9" y1="24" x2="650.9" y2="566" stroke="#fff" stroke-width="2" />
<text x="592.7" y="34.5" fill="#fff" font-size="9.5" text-anchor="start" textLength="44.3" lengthAdjust="spacingAndGlyphs" >Wind Speed</text>
<text x="592.7" y="44.5" fill="#fff" font-size="9.5" text-anchor="start" textLength="26.7" lengthAdjust="spacingAndGlyphs" >(knots)</text>
<line x1="590.2" y1="24.5" x2="606.8" y2="24.5" stroke="#00e8ff" stroke-width="1.5" />
<line x1="590.2" y1="116.9" x2="610" y2="116.9" stroke="#00e8ff" stroke-width="2" />
<line x1="590.2" y1="183" x2="615.9" y2="183" stroke="#00e8ff" stroke-width="2" />
<line x1="590.2" y1="197" x2="617" y2="197" stroke="#00e8ff" stroke-width="2" />
<line x1="590.2" y1="213.9" x2="622" y2="213.9" stroke="#00e8ff" stroke-width="2" />
<line x1="590.2" y1="223.4" x2="625" y2="223.4" stroke="#00e8ff" stroke-width="4.5" />
<line x1="590.2" y1="228.7" x2="626.9" y2="228.7" stroke="#00e8ff" stroke-width="3.5" />
<line x1="590.2" y1="233.5" x2="626" y2="233.5" stroke="#00e8ff" stroke-width="2" />
<line x1="590.2" y1="255" x2="625" y2="255" stroke="#00e8ff" stroke-width="2" />
<line x1="590.2" y1="268" x2="624" y2="268" stroke="#00e8ff" stroke-width="2" />
<line x1="590.2" y1="272" x2="624" y2="272" stroke="#00e8ff" stroke-width="2" />
<line x1="590.2" y1="276" x2="624" y2="276" stroke="#00e8ff" stroke-width="2" />
<line x1="590.2" y1="285.9" x2="624" y2="285.9" stroke="#f0f000" stroke-width="2" />
<line x1="590.2" y1="296.8" x2="624" y2="296.8" stroke="#f0f000" stroke-width="2" />
<line x1="590.2" y1="300.6" x2="624" y2="300.6" stroke="#f0f000" stroke-width="2" />
<line x1="590.2" y1="304.8" x2="624" y2="304.8" stroke="#f0f000" stroke-width="2" />
<line x1="590.2" y1="315" x2="622" y2="315" stroke="#f0f000" stroke-width="2" />
<line x1="590.2" y1="332.2" x2="620.8" y2="332.2" stroke="#f0f000" stroke-width="4" />
<line x1="590.2" y1="336.9" x2="620.8" y2="336.9" stroke="#f0f000" stroke-width="2" />
<line x1="590.2" y1="341.8" x2="620.8" y2="341.8" stroke="#f0f000" stroke-width="2" />
<line x1="590.2" y1="354" x2="619" y2="354" stroke="#f0f000" stroke-width="2" />
<line x1="590.2" y1="364.2" x2="618" y2="364.2" stroke="#f0f000" stroke-width="2" />
<line x1="590.2" y1="376.2" x2="617" y2="376.2" stroke="#f0f000" stroke-width="3.6" />
<line x1="590.2" y1="379.7" x2="616.6" y2="379.7" stroke="#00f000" stroke-width="3.4" />
<line x1="590.2" y1="383.8" x2="616.2" y2="383.8" stroke="#00f000" stroke-width="2" />
<line x1="590.2" y1="392.4" x2="615" y2="392.4" stroke="#00f000" stroke-width="4.8" />
<line x1="590.2" y1="398.7" x2="613" y2="398.7" stroke="#00f000" stroke-width="2" />
<line x1="590.2" y1="405.7" x2="611" y2="405.7" stroke="#00f000" stroke-width="2" />
<line x1="590.2" y1="408.8" x2="611" y2="408.8" stroke="#00f000" stroke-width="2" />
<line x1="590.2" y1="414.9" x2="608.9" y2="414.9" stroke="#00f000" stroke-width="2" />
<line x1="590.2" y1="421.9" x2="606" y2="421.9" stroke="#00f000" stroke-width="2" />
<line x1="590.2" y1="426.8" x2="604" y2="426.8" stroke="#00f000" stroke-width="2" />
<line x1="590.2" y1="440.5" x2="601.9" y2="440.5" stroke="#00f000" stroke-width="3" />
<line x1="590.2" y1="453" x2="601.9" y2="453" stroke="#00f000" stroke-width="2" />
<line x1="590.2" y1="466" x2="601.9" y2="466" stroke="#00f000" stroke-width="2" />
<line x1="590.2" y1="471" x2="603" y2="471" stroke="#ff0000" stroke-width="2" />
<line x1="590.2" y1="485" x2="603" y2="485" stroke="#ff0000" stroke-width="2" />
<line x1="590.2" y1="495.9" x2="598.3" y2="495.9" stroke="#ff0000" stroke-width="2" />
<line x1="590.2" y1="504" x2="598.3" y2="504" stroke="#ff0000" stroke-width="2" />
<line x1="590.2" y1="516" x2="596" y2="516" stroke="#ff0000" stroke-width="2" />
<line x1="590.2" y1="518.8" x2="597" y2="518.8" stroke="#ff0000" stroke-width="2" />
<line x1="590.2" y1="534.9" x2="601.2" y2="534.9" stroke="#ff00ff" stroke-width="2" />
<line x1="590.2" y1="544.4" x2="597.6" y2="544.4" stroke="#ff00ff" stroke-width="3" />
<line x1="590.2" y1="550" x2="596" y2="550" stroke="#ff00ff" stroke-width="2" />
<line x1="590.2" y1="553.5" x2="595" y2="553.5" stroke="#ff00ff" stroke-width="3" />
<line x1="589" y1="565" x2="692" y2="565" stroke="#fff" stroke-width="2" />
<text x="605.4" y="580" fill="#fff" font-size="11" text-anchor="middle" >40</text>
<text x="623" y="580" fill="#fff" font-size="11" text-anchor="middle" >80</text>
<text x="640.6" y="580" fill="#fff" font-size="11" text-anchor="middle" >120</text>
<line x1="651" y1="24.5" x2="692" y2="24.5" stroke="#fff" stroke-width="1.2" />
<line x1="692" y1="24" x2="692" y2="566" stroke="#fff" stroke-width="2" />
<line x1="670.4" y1="26" x2="670.4" y2="563" stroke="#9a9a9a" stroke-width="1" stroke-dasharray="2.5 2"/>
<text x="653.6" y="34.5" fill="#fff" font-size="9.5" text-anchor="start" textLength="34.7" lengthAdjust="spacingAndGlyphs" >Inf. Temp.</text>
<text x="653.6" y="44.5" fill="#fff" font-size="9.5" text-anchor="start" textLength="32.3" lengthAdjust="spacingAndGlyphs" >Adv. (C/</text>
<text x="653.6" y="54.5" fill="#fff" font-size="9.5" text-anchor="start" textLength="10.8" lengthAdjust="spacingAndGlyphs" >hr)</text>
<line x1="672" y1="29.8" x2="672" y2="186.2" stroke="#ff0000" stroke-width="2" />
<rect x="671.5" y="186.2" width="10.2" height="93.5" fill="none" stroke="#ff0000" stroke-width="1.2" />
<rect x="668.6" y="279.7" width="3.2" height="115.8" fill="none" stroke="#3aa0e0" stroke-width="1.2" />
<line x1="671" y1="395.5" x2="671" y2="437" stroke="#3aa0e0" stroke-width="2" />
<rect x="671.5" y="437" width="2" height="35.4" fill="none" stroke="#ff0000" stroke-width="1.2" />
<rect x="671.5" y="472.4" width="5.1" height="30.9" fill="none" stroke="#ff0000" stroke-width="1.2" />
<rect x="671.5" y="503.3" width="2" height="26.7" fill="none" stroke="#ff0000" stroke-width="1.2" />
<rect x="671.5" y="530" width="5.1" height="23.9" fill="none" stroke="#ff0000" stroke-width="1.2" />
<text x="687.5" y="115.5" fill="#ff0000" font-size="9" text-anchor="end" >0.4</text>
<text x="687.5" y="238.9" fill="#ff0000" font-size="9" text-anchor="end" >6.5</text>
<text x="687.5" y="462.5" fill="#ff0000" font-size="9" text-anchor="end" >1.4</text>
<text x="687.5" y="494.9" fill="#ff0000" font-size="9" text-anchor="end" >2.9</text>
<text x="687.5" y="523.5" fill="#ff0000" font-size="9" text-anchor="end" >1.4</text>
<text x="687.5" y="549.5" fill="#ff0000" font-size="9" text-anchor="end" >3.2</text>
<text x="668" y="318.5" fill="#3aa0e0" font-size="9" text-anchor="end" >-1.9</text>
<text x="668" y="377.9" fill="#3aa0e0" font-size="9" text-anchor="end" >-1.7</text>
<text x="668" y="423.5" fill="#3aa0e0" font-size="9" text-anchor="end" >-0.6</text>
<g clip-path="url(#hodc)">
<circle cx="934.9" cy="227.6" r="30.5" fill="none" stroke="#686868" stroke-width="1.05" stroke-dasharray="5.5 3"/>
<circle cx="934.9" cy="227.6" r="61" fill="none" stroke="#686868" stroke-width="1.05" stroke-dasharray="5.5 3"/>
<circle cx="934.9" cy="227.6" r="91.6" fill="none" stroke="#686868" stroke-width="1.05" stroke-dasharray="5.5 3"/>
<circle cx="934.9" cy="227.6" r="122.1" fill="none" stroke="#686868" stroke-width="1.05" stroke-dasharray="5.5 3"/>
<circle cx="934.9" cy="227.6" r="152.6" fill="none" stroke="#686868" stroke-width="1.05" stroke-dasharray="5.5 3"/>
<circle cx="934.9" cy="227.6" r="183.1" fill="none" stroke="#686868" stroke-width="1.05" stroke-dasharray="5.5 3"/>
<circle cx="934.9" cy="227.6" r="213.6" fill="none" stroke="#686868" stroke-width="1.05" stroke-dasharray="5.5 3"/>
<circle cx="934.9" cy="227.6" r="244.2" fill="none" stroke="#686868" stroke-width="1.05" stroke-dasharray="5.5 3"/>
<circle cx="934.9" cy="227.6" r="274.7" fill="none" stroke="#686868" stroke-width="1.05" stroke-dasharray="5.5 3"/>
<circle cx="934.9" cy="227.6" r="305.2" fill="none" stroke="#686868" stroke-width="1.05" stroke-dasharray="5.5 3"/>
<circle cx="934.9" cy="227.6" r="335.7" fill="none" stroke="#686868" stroke-width="1.05" stroke-dasharray="5.5 3"/>
<line x1="934.9" y1="24" x2="934.9" y2="431" stroke="#5c5c5c" stroke-width="1.8" stroke-dasharray="5 2.6"/>
<line x1="692" y1="227.6" x2="1180" y2="227.6" stroke="#5c5c5c" stroke-width="1.8" stroke-dasharray="5 2.6"/>
<text x="947.4" y="204.1" fill="#fff" font-size="10.5" text-anchor="middle" >10</text>
<text x="947.4" y="265.1" fill="#fff" font-size="10.5" text-anchor="middle" >10</text>
<text x="947.4" y="173.6" fill="#fff" font-size="10.5" text-anchor="middle" >20</text>
<text x="947.4" y="295.6" fill="#fff" font-size="10.5" text-anchor="middle" >20</text>
<text x="947.4" y="143" fill="#fff" font-size="10.5" text-anchor="middle" >30</text>
<text x="947.4" y="326.2" fill="#fff" font-size="10.5" text-anchor="middle" >30</text>
<text x="947.4" y="112.5" fill="#fff" font-size="10.5" text-anchor="middle" >40</text>
<text x="947.4" y="356.7" fill="#fff" font-size="10.5" text-anchor="middle" >40</text>
<text x="947.4" y="82" fill="#fff" font-size="10.5" text-anchor="middle" >50</text>
<text x="947.4" y="387.2" fill="#fff" font-size="10.5" text-anchor="middle" >50</text>
<text x="947.4" y="51.5" fill="#fff" font-size="10.5" text-anchor="middle" >60</text>
<text x="947.4" y="417.7" fill="#fff" font-size="10.5" text-anchor="middle" >60</text>
<text x="905.9" y="244.6" fill="#fff" font-size="10.5" text-anchor="middle" >10</text>
<text x="967.9" y="244.6" fill="#fff" font-size="10.5" text-anchor="middle" >10</text>
<text x="875.4" y="244.6" fill="#fff" font-size="10.5" text-anchor="middle" >20</text>
<text x="998.4" y="244.6" fill="#fff" font-size="10.5" text-anchor="middle" >20</text>
<text x="844.8" y="244.6" fill="#fff" font-size="10.5" text-anchor="middle" >30</text>
<text x="1029" y="244.6" fill="#fff" font-size="10.5" text-anchor="middle" >30</text>
<text x="814.3" y="244.6" fill="#fff" font-size="10.5" text-anchor="middle" >40</text>
<text x="1059.5" y="244.6" fill="#fff" font-size="10.5" text-anchor="middle" >40</text>
<text x="783.8" y="244.6" fill="#fff" font-size="10.5" text-anchor="middle" >50</text>
<text x="1090" y="244.6" fill="#fff" font-size="10.5" text-anchor="middle" >50</text>
<text x="753.3" y="244.6" fill="#fff" font-size="10.5" text-anchor="middle" >60</text>
<text x="1120.5" y="244.6" fill="#fff" font-size="10.5" text-anchor="middle" >60</text>
<text x="722.8" y="244.6" fill="#fff" font-size="10.5" text-anchor="middle" >70</text>
<text x="1151" y="244.6" fill="#fff" font-size="10.5" text-anchor="middle" >70</text>
<text x="692.2" y="244.6" fill="#fff" font-size="10.5" text-anchor="middle" >80</text>
<text x="1181.6" y="244.6" fill="#fff" font-size="10.5" text-anchor="middle" >80</text>
<polyline points="902.6,230.8 895.3,221.3 887.6,201.3 895.3,170.4 914.2,177" fill="none" stroke="#ff00ff" stroke-width="2" stroke-linejoin="round" />
<polyline points="914.2,177 930.4,182.7 934.9,187.9 939.9,173.5 947,177.5 978.1,154.2 995.7,167.9" fill="none" stroke="#ff0000" stroke-width="2" stroke-linejoin="round" />
<polyline points="995.7,167.9 998.1,173.5 1002,182 1004.8,188.7 1017.3,174.9 1044.4,170.3 1060.7,162.7 1074.2,130.2 1086.4,122" fill="none" stroke="#00e000" stroke-width="2" stroke-linejoin="round" />
<polyline points="1086.4,122 1091,104 1095.9,92.2 1098,86 1102.7,73.2 1104,68 1105.4,64.5 1103.5,61.5 1101.4,62.4" fill="none" stroke="#ffff00" stroke-width="2" stroke-linejoin="round" />
<polyline points="1101.4,62.4 1109.5,54.2 1117.6,61 1131.2,63.7 1128.5,78.6 1129.8,81.4 1116.3,108.5 1100,147.8 1104.1,166.8 1095.9,172.2" fill="none" stroke="#00e0f0" stroke-width="2" stroke-linejoin="round" />
<rect x="994.8" y="182.5" width="8" height="7.6" fill="none" stroke="#d09000" stroke-width="2" />
<text x="1002" y="193" fill="#d09000" font-size="10" text-anchor="start" >232/27</text>
<circle cx="952.9" cy="136.7" r="2.6" fill="none" stroke="#20a8e0" stroke-width="1.2"/>
<text x="956.4" y="152" fill="#20a8e0" font-size="10" text-anchor="start" >191/30 LM</text>
<circle cx="997.8" cy="213.6" r="2.8" fill="none" stroke="#e05a5a" stroke-width="1.2"/>
<text x="1000.6" y="228" fill="#e05a5a" font-size="10" text-anchor="start" >257/21 RM</text>
<circle cx="1059.3" cy="180.3" r="3" fill="none" stroke="#e0e0e0" stroke-width="1.2"/>
<text x="1064.5" y="192.5" fill="#fff" font-size="10" text-anchor="start" >UP=249/44</text>
<circle cx="1155.6" cy="97.1" r="3" fill="none" stroke="#e0e0e0" stroke-width="1.2"/>
<text x="1159.5" y="110" fill="#fff" font-size="10" text-anchor="start" >DN=</text>
</g>
<line x1="692" y1="24.5" x2="1179" y2="24.5" stroke="#fff" stroke-width="1.3" />
<line x1="1178.4" y1="24" x2="1178.4" y2="566" stroke="#fff" stroke-width="1.5" />
<line x1="692" y1="432" x2="1179" y2="432" stroke="#fff" stroke-width="2" />
<line x1="692" y1="565" x2="1179" y2="565" stroke="#fff" stroke-width="2" />
<line x1="812.9" y1="432" x2="812.9" y2="566" stroke="#fff" stroke-width="2" />
<line x1="935" y1="432" x2="935" y2="566" stroke="#fff" stroke-width="2" />
<line x1="1057" y1="432" x2="1057" y2="566" stroke="#fff" stroke-width="2" />
<line x1="751.6" y1="433" x2="751.6" y2="564" stroke="#123c82" stroke-width="1.7" />
<line x1="693" y1="497.7" x2="811" y2="497.7" stroke="#123c82" stroke-width="1.7" />
<line x1="751.6" y1="497.7" x2="783" y2="490.8" stroke="#fff" stroke-width="2" />
<text x="806.5" y="445" fill="#fff" font-size="11" text-anchor="end" textLength="27.3" lengthAdjust="spacingAndGlyphs" >-- deg</text>
<text x="697.3" y="562" fill="#fff" font-size="11" text-anchor="start" textLength="57" lengthAdjust="spacingAndGlyphs" >Storm Slinky</text>
<line x1="814" y1="452.8" x2="819.5" y2="452.8" stroke="#c8c8c8" stroke-width="1.8" />
<line x1="928.5" y1="452.8" x2="934" y2="452.8" stroke="#c8c8c8" stroke-width="1.8" />
<text x="818.5" y="456.3" fill="#fff" font-size="9" text-anchor="start" textLength="16" lengthAdjust="spacingAndGlyphs" >500</text>
<line x1="814" y1="473.5" x2="819.5" y2="473.5" stroke="#c8c8c8" stroke-width="1.8" />
<line x1="928.5" y1="473.5" x2="934" y2="473.5" stroke="#c8c8c8" stroke-width="1.8" />
<text x="818.5" y="477" fill="#fff" font-size="9" text-anchor="start" textLength="16" lengthAdjust="spacingAndGlyphs" >600</text>
<line x1="814" y1="494.7" x2="819.5" y2="494.7" stroke="#c8c8c8" stroke-width="1.8" />
<line x1="928.5" y1="494.7" x2="934" y2="494.7" stroke="#c8c8c8" stroke-width="1.8" />
<text x="818.5" y="498.2" fill="#fff" font-size="9" text-anchor="start" textLength="16" lengthAdjust="spacingAndGlyphs" >700</text>
<line x1="814" y1="516.7" x2="819.5" y2="516.7" stroke="#c8c8c8" stroke-width="1.8" />
<line x1="928.5" y1="516.7" x2="934" y2="516.7" stroke="#c8c8c8" stroke-width="1.8" />
<text x="818.5" y="520.2" fill="#fff" font-size="9" text-anchor="start" textLength="16" lengthAdjust="spacingAndGlyphs" >800</text>
<line x1="814" y1="537.9" x2="819.5" y2="537.9" stroke="#c8c8c8" stroke-width="1.8" />
<line x1="928.5" y1="537.9" x2="934" y2="537.9" stroke="#c8c8c8" stroke-width="1.8" />
<text x="818.5" y="541.4" fill="#fff" font-size="9" text-anchor="start" textLength="16" lengthAdjust="spacingAndGlyphs" >900</text>
<line x1="814" y1="558.5" x2="819.5" y2="558.5" stroke="#c8c8c8" stroke-width="1.8" />
<line x1="928.5" y1="558.5" x2="934" y2="558.5" stroke="#c8c8c8" stroke-width="1.8" />
<text x="818.5" y="562" fill="#fff" font-size="9" text-anchor="start" textLength="20" lengthAdjust="spacingAndGlyphs" >1000</text>
<line x1="821" y1="433" x2="821" y2="437.5" stroke="#c8c8c8" stroke-width="1.5" />
<line x1="849.7" y1="433" x2="849.7" y2="437.5" stroke="#c8c8c8" stroke-width="1.5" />
<line x1="878.9" y1="433" x2="878.9" y2="437.5" stroke="#c8c8c8" stroke-width="1.5" />
<line x1="908.3" y1="433" x2="908.3" y2="437.5" stroke="#c8c8c8" stroke-width="1.5" />
<text x="829" y="558" fill="#fff" font-size="9" text-anchor="middle" >280</text>
<text x="857.7" y="558" fill="#fff" font-size="9" text-anchor="middle" >290</text>
<text x="887" y="558" fill="#fff" font-size="9" text-anchor="middle" >300</text>
<text x="916.3" y="558" fill="#fff" font-size="9" text-anchor="middle" >310</text>
<text x="872.7" y="465" fill="#fff" font-size="9" text-anchor="middle" >Theta-E</text>
<text x="872.7" y="475" fill="#fff" font-size="9" text-anchor="middle" >v.</text>
<text x="872.7" y="485" fill="#fff" font-size="9" text-anchor="middle" >Pres</text>
<polyline points="914.5,432.5 914,436 916.7,440.3 908.5,445.2 916.7,446 907.5,447.4 904.2,451.7 910.7,452.8 912.4,458.7 899.9,461.5 897.7,466.9 905.3,468.5 908,476.6 909.6,483.7 899.9,491.8 901.4,504.5 892.2,511.4 893.4,518.3 878.4,526.4 876.1,542.5 871.5,549.4 848.5,555.1 841.7,559.7" fill="none" stroke="#f0f000" stroke-width="2" stroke-linejoin="round" />
<line x1="936" y1="562.7" x2="941" y2="562.7" stroke="#bdbdbd" stroke-width="2" />
<line x1="1051.5" y1="562.7" x2="1056.5" y2="562.7" stroke="#bdbdbd" stroke-width="2" />
<line x1="936" y1="546.2" x2="941" y2="546.2" stroke="#bdbdbd" stroke-width="2" />
<line x1="1051.5" y1="546.2" x2="1056.5" y2="546.2" stroke="#bdbdbd" stroke-width="2" />
<text x="951.2" y="549.5" fill="#fff" font-size="9.5" text-anchor="middle" >2</text>
<line x1="936" y1="529.7" x2="941" y2="529.7" stroke="#bdbdbd" stroke-width="2" />
<line x1="1051.5" y1="529.7" x2="1056.5" y2="529.7" stroke="#bdbdbd" stroke-width="2" />
<text x="951.2" y="533" fill="#fff" font-size="9.5" text-anchor="middle" >4</text>
<line x1="936" y1="513.2" x2="941" y2="513.2" stroke="#bdbdbd" stroke-width="2" />
<line x1="1051.5" y1="513.2" x2="1056.5" y2="513.2" stroke="#bdbdbd" stroke-width="2" />
<text x="951.2" y="516.5" fill="#fff" font-size="9.5" text-anchor="middle" >6</text>
<line x1="936" y1="496.7" x2="941" y2="496.7" stroke="#bdbdbd" stroke-width="2" />
<line x1="1051.5" y1="496.7" x2="1056.5" y2="496.7" stroke="#bdbdbd" stroke-width="2" />
<text x="951.2" y="500" fill="#fff" font-size="9.5" text-anchor="middle" >8</text>
<line x1="936" y1="480.2" x2="941" y2="480.2" stroke="#bdbdbd" stroke-width="2" />
<line x1="1051.5" y1="480.2" x2="1056.5" y2="480.2" stroke="#bdbdbd" stroke-width="2" />
<text x="951.2" y="483.5" fill="#fff" font-size="9.5" text-anchor="middle" >10</text>
<line x1="936" y1="463.7" x2="941" y2="463.7" stroke="#bdbdbd" stroke-width="2" />
<line x1="1051.5" y1="463.7" x2="1056.5" y2="463.7" stroke="#bdbdbd" stroke-width="2" />
<text x="951.2" y="467" fill="#fff" font-size="9.5" text-anchor="middle" >12</text>
<line x1="936" y1="447.2" x2="941" y2="447.2" stroke="#bdbdbd" stroke-width="2" />
<line x1="1051.5" y1="447.2" x2="1056.5" y2="447.2" stroke="#bdbdbd" stroke-width="2" />
<text x="951.2" y="450.5" fill="#fff" font-size="9.5" text-anchor="middle" >14</text>
<line x1="951.2" y1="433" x2="951.2" y2="437" stroke="#bdbdbd" stroke-width="1.6" />
<line x1="968.1" y1="433" x2="968.1" y2="437" stroke="#bdbdbd" stroke-width="1.6" />
<line x1="984" y1="433" x2="984" y2="437" stroke="#bdbdbd" stroke-width="1.6" />
<line x1="1017.5" y1="433" x2="1017.5" y2="437" stroke="#bdbdbd" stroke-width="1.6" />
<line x1="1033.8" y1="433" x2="1033.8" y2="437" stroke="#bdbdbd" stroke-width="1.6" />
<line x1="951.2" y1="560" x2="951.2" y2="564" stroke="#bdbdbd" stroke-width="1.6" />
<line x1="968.1" y1="560" x2="968.1" y2="564" stroke="#bdbdbd" stroke-width="1.6" />
<line x1="984" y1="560" x2="984" y2="564" stroke="#bdbdbd" stroke-width="1.6" />
<line x1="1001" y1="560" x2="1001" y2="564" stroke="#bdbdbd" stroke-width="1.6" />
<line x1="1017.5" y1="560" x2="1017.5" y2="564" stroke="#bdbdbd" stroke-width="1.6" />
<line x1="1033.8" y1="560" x2="1033.8" y2="564" stroke="#bdbdbd" stroke-width="1.6" />
<line x1="1050.8" y1="560" x2="1050.8" y2="564" stroke="#bdbdbd" stroke-width="1.6" />
<line x1="958.6" y1="434" x2="958.6" y2="564" stroke="#a0a0a0" stroke-width="2" stroke-dasharray="3 2.4"/>
<line x1="1001" y1="433" x2="1001" y2="495" stroke="#7a0a90" stroke-width="2" stroke-dasharray="4 2"/>
<line x1="1050.8" y1="433" x2="1050.8" y2="495" stroke="#7a0a90" stroke-width="2" stroke-dasharray="4 2"/>
<text x="973.4" y="448" fill="#fff" font-size="9" text-anchor="middle" >SR Wind</text>
<text x="973.4" y="457.7" fill="#fff" font-size="9" text-anchor="middle" >v.</text>
<text x="973.4" y="467.2" fill="#fff" font-size="9" text-anchor="middle" >Height</text>
<text x="1021.5" y="456.6" fill="#d000e0" font-size="8.8" text-anchor="middle" textLength="25.7" lengthAdjust="spacingAndGlyphs" >Classic</text>
<text x="1021.5" y="466.1" fill="#d000e0" font-size="8.8" text-anchor="middle" textLength="32" lengthAdjust="spacingAndGlyphs" >Supercell</text>
<polyline points="966,432.4 974.5,451.5 1001.2,470 1033.8,474.5 1044.4,476.3 1035.9,486.4 1035.9,491.7 1023.2,498.1 1019,503.4 1009.8,508.3 998.1,515.8 986.5,517.9 974.9,521.2 964.9,523.7 951.6,527.4 947.9,531.6 949.1,534.1 959.1,537.8 968.2,541.5 969.1,544 973.2,547.8 972.4,550.7 976.5,552.3 984.9,554 993.2,555.6 994.8,558.1 988.2,562.7" fill="none" stroke="#ff0000" stroke-width="2" stroke-linejoin="round" />
<line x1="974.9" y1="511.9" x2="974.9" y2="529.9" stroke="#60a0ff" stroke-width="2" />
<line x1="1033.8" y1="470.6" x2="1033.8" y2="488.6" stroke="#9030e0" stroke-width="2" />
<line x1="981.9" y1="544.7" x2="981.9" y2="562.7" stroke="#b00000" stroke-width="2" />
<line x1="1057" y1="451.9" x2="1178" y2="451.9" stroke="#fff" stroke-width="2" />
<text x="1117.5" y="447" fill="#fff" font-size="11" text-anchor="middle" textLength="99.6" lengthAdjust="spacingAndGlyphs" >Potential Hazard Type</text>
<text x="1117.5" y="509" fill="#f0b020" font-size="15" text-anchor="middle" textLength="38.8" lengthAdjust="spacingAndGlyphs" >NONE</text>
<g style="letter-spacing:0.22px">
<rect x="2.4" y="588.6" width="1175.6" height="192.4" fill="none" stroke="#379bd7" stroke-width="2.8" />
<line x1="297.5" y1="589" x2="297.5" y2="781" stroke="#379bd7" stroke-width="1.4" />
<line x1="590.4" y1="589" x2="590.4" y2="781" stroke="#379bd7" stroke-width="1.4" />
<line x1="884.6" y1="589" x2="884.6" y2="781" stroke="#379bd7" stroke-width="1.4" />
<line x1="4" y1="601.3" x2="296" y2="601.3" stroke="#fff" stroke-width="1.5" />
<line x1="4" y1="652.6" x2="296" y2="652.6" stroke="#fff" stroke-width="1.5" />
<line x1="4" y1="722.6" x2="296" y2="722.6" stroke="#fff" stroke-width="1.5" />
<line x1="204.3" y1="722.6" x2="204.3" y2="780" stroke="#fff" stroke-width="1.5" />
<rect x="5.7" y="627.4" width="291" height="12.2" fill="none" stroke="#6a4020" stroke-width="1.3" />
<text x="40.2" y="601" fill="#fff" font-size="10" text-anchor="middle" >PCL</text>
<text x="76" y="601" fill="#fff" font-size="10" text-anchor="middle" >CAPE</text>
<text x="113.3" y="601" fill="#fff" font-size="10" text-anchor="middle" >CINH</text>
<text x="149.6" y="601" fill="#fff" font-size="10" text-anchor="middle" >LCL</text>
<text x="186.7" y="601" fill="#fff" font-size="10" text-anchor="middle" >LI</text>
<text x="222.5" y="601" fill="#fff" font-size="10" text-anchor="middle" >LFC</text>
<text x="259.3" y="601" fill="#fff" font-size="10" text-anchor="middle" >EL</text>
<text x="40.2" y="615.5" fill="#fff" font-size="10" text-anchor="middle" >SFC</text>
<text x="76" y="615.5" fill="#fff" font-size="10" text-anchor="middle" >0</text>
<text x="113.3" y="615.5" fill="#fff" font-size="10" text-anchor="middle" >0</text>
<text x="149.6" y="615.5" fill="#fff" font-size="10" text-anchor="middle" >53</text>
<text x="186.7" y="615.5" fill="#fff" font-size="10" text-anchor="middle" >17</text>
<text x="222.5" y="615.5" fill="#fff" font-size="10" text-anchor="middle" >--</text>
<text x="259.3" y="615.5" fill="#fff" font-size="10" text-anchor="middle" >53</text>
<text x="40.2" y="626.5" fill="#fff" font-size="10" text-anchor="middle" >EFF</text>
<text x="76" y="626.5" fill="#fff" font-size="10" text-anchor="middle" >0</text>
<text x="113.3" y="626.5" fill="#fff" font-size="10" text-anchor="middle" >0</text>
<text x="149.6" y="626.5" fill="#fff" font-size="10" text-anchor="middle" >53</text>
<text x="186.7" y="626.5" fill="#fff" font-size="10" text-anchor="middle" >17</text>
<text x="222.5" y="626.5" fill="#fff" font-size="10" text-anchor="middle" >--</text>
<text x="259.3" y="626.5" fill="#fff" font-size="10" text-anchor="middle" >53</text>
<text x="40.2" y="637.4" fill="#00e0ff" font-size="10" text-anchor="middle" >ML</text>
<text x="76" y="637.4" fill="#fff" font-size="10" text-anchor="middle" >0</text>
<text x="113.3" y="637.4" fill="#fff" font-size="10" text-anchor="middle" >0</text>
<text x="149.6" y="637.4" fill="#fff" font-size="10" text-anchor="middle" >447</text>
<text x="186.7" y="637.4" fill="#fff" font-size="10" text-anchor="middle" >12</text>
<text x="222.5" y="637.4" fill="#fff" font-size="10" text-anchor="middle" >--</text>
<text x="259.3" y="637.4" fill="#fff" font-size="10" text-anchor="middle" >447</text>
<text x="40.2" y="648.4" fill="#fff" font-size="10" text-anchor="middle" >MU</text>
<text x="76" y="648.4" fill="#fff" font-size="10" text-anchor="middle" >0</text>
<text x="113.3" y="648.4" fill="#fff" font-size="10" text-anchor="middle" >0</text>
<text x="149.6" y="648.4" fill="#fff" font-size="10" text-anchor="middle" >3193</text>
<text x="186.7" y="648.4" fill="#fff" font-size="10" text-anchor="middle" >3</text>
<text x="222.5" y="648.4" fill="#fff" font-size="10" text-anchor="middle" >--</text>
<text x="259.3" y="648.4" fill="#fff" font-size="10" text-anchor="middle" >3193</text>
<text x="9.6" y="664.8" fill="#fff" font-size="10" text-anchor="start" >PW = 0.72in</text>
<text x="106.3" y="664.8" fill="#fff" font-size="10" text-anchor="start" >K = 19</text>
<text x="180.2" y="664.8" fill="#fff" font-size="10" text-anchor="start" >WNDG = 0.0</text>
<text x="9.6" y="675.8" fill="#fff" font-size="10" text-anchor="start" >MeanW = 5.0g/kg</text>
<text x="106.3" y="675.8" fill="#fff" font-size="10" text-anchor="start" >TT = 44</text>
<text x="180.2" y="675.8" fill="#fff" font-size="10" text-anchor="start" >TEI = 23</text>
<text x="9.6" y="686.8" fill="#fff" font-size="10" text-anchor="start" >LowRH = 94%</text>
<text x="106.3" y="686.8" fill="#fff" font-size="10" text-anchor="start" >ConvT = 73F</text>
<text x="180.2" y="686.8" fill="#fff" font-size="10" text-anchor="start" >3CAPE = 0</text>
<text x="9.6" y="697.7" fill="#fff" font-size="10" text-anchor="start" >MidRH = 89%</text>
<text x="106.3" y="697.7" fill="#fff" font-size="10" text-anchor="start" >maxT = 56F</text>
<text x="180.2" y="697.7" fill="#fff" font-size="10" text-anchor="start" >MBURST = 0</text>
<text x="9.6" y="708.7" fill="#fff" font-size="10" text-anchor="start" >DCAPE = -39</text>
<text x="106.3" y="708.7" fill="#fff" font-size="10" text-anchor="start" >ESP = 0</text>
<text x="180.2" y="708.7" fill="#fff" font-size="10" text-anchor="start" ></text>
<text x="9.6" y="719.7" fill="#fff" font-size="10" text-anchor="start" >DownT = 44F</text>
<text x="106.3" y="719.7" fill="#fff" font-size="10" text-anchor="start" >MMP = 0.0</text>
<text x="180.2" y="719.7" fill="#fff" font-size="10" text-anchor="start" >SigSvr = 0 m3/s3</text>
<text x="9.1" y="735.8" fill="#00e000" font-size="10" text-anchor="start" >Sfc-3km AGL LR = 2.7 C/km</text>
<text x="9.1" y="746.8" fill="#e8e800" font-size="10" text-anchor="start" >3-6km AGL LR = 6.6 C/km</text>
<text x="9.1" y="757.7" fill="#00e000" font-size="10" text-anchor="start" >850-500mb LR = 5.7 C/km</text>
<text x="9.1" y="768.7" fill="#e8e800" font-size="10" text-anchor="start" >700-500mb LR = 6.8 C/km</text>
<text x="209.5" y="735.8" fill="#fff" font-size="10" text-anchor="start" >Supercell = 0.0</text>
<text x="209.5" y="746.8" fill="#fff" font-size="10" text-anchor="start" >STP (cin) = 0.0</text>
<text x="209.5" y="757.7" fill="#fff" font-size="10" text-anchor="start" >STP (fix) = 0.0</text>
<text x="209.5" y="768.7" fill="#fff" font-size="10" text-anchor="start" >SHIP = 0.0</text>
<line x1="298" y1="604.4" x2="589.5" y2="604.4" stroke="#fff" stroke-width="1.5" />
<text x="416.1" y="602.5" fill="#fff" font-size="10" text-anchor="end" >SRH (m2/s2)</text>
<text x="482.6" y="602.5" fill="#fff" font-size="10" text-anchor="end" >Shear (kt)</text>
<text x="535" y="602.5" fill="#fff" font-size="10" text-anchor="end" >MnWind</text>
<text x="582.3" y="602.5" fill="#fff" font-size="10" text-anchor="end" >SRW</text>
<text x="303.7" y="616" fill="#fff" font-size="10" text-anchor="start" >SFC-1km</text>
<text x="413" y="616" fill="#fff" font-size="10" text-anchor="end" >194</text>
<text x="472.6" y="616" fill="#fff" font-size="10" text-anchor="end" >18</text>
<text x="531.2" y="616" fill="#fff" font-size="10" text-anchor="end" >130/16</text>
<text x="589.5" y="616" fill="#fff" font-size="10" text-anchor="end" >100/34</text>
<text x="303.7" y="627.1" fill="#fff" font-size="10" text-anchor="start" >SFC-3km</text>
<text x="413" y="627.1" fill="#fff" font-size="10" text-anchor="end" >311</text>
<text x="472.6" y="627.1" fill="#fff" font-size="10" text-anchor="end" >37</text>
<text x="531.2" y="627.1" fill="#fff" font-size="10" text-anchor="end" >173/15</text>
<text x="589.5" y="627.1" fill="#fff" font-size="10" text-anchor="end" >114/25</text>
<text x="303.7" y="638.3" fill="#fff" font-size="10" text-anchor="start" >Eff Inflow Layer</text>
<text x="413" y="638.3" fill="#fff" font-size="10" text-anchor="end" >--</text>
<text x="472.6" y="638.3" fill="#fff" font-size="10" text-anchor="end" >--</text>
<text x="531.2" y="638.3" fill="#fff" font-size="10" text-anchor="end" >--/--</text>
<text x="589.5" y="638.3" fill="#fff" font-size="10" text-anchor="end" >--/--</text>
<text x="303.7" y="654.1" fill="#fff" font-size="10" text-anchor="start" >SFC-6km</text>
<text x="472.6" y="654.1" fill="#fff" font-size="10" text-anchor="end" >70</text>
<text x="531.2" y="654.1" fill="#fff" font-size="10" text-anchor="end" >209/19</text>
<text x="589.5" y="654.1" fill="#fff" font-size="10" text-anchor="end" >135/16</text>
<text x="303.7" y="665.2" fill="#fff" font-size="10" text-anchor="start" >SFC-8km</text>
<text x="472.6" y="665.2" fill="#fff" font-size="10" text-anchor="end" >83</text>
<text x="531.2" y="665.2" fill="#fff" font-size="10" text-anchor="end" >216/23</text>
<text x="589.5" y="665.2" fill="#fff" font-size="10" text-anchor="end" >154/16</text>
<text x="303.7" y="676.2" fill="#e0a000" font-size="10" text-anchor="start" >LCL-EL (Cloud Layer)</text>
<text x="472.6" y="676.2" fill="#fff" font-size="10" text-anchor="end" >0</text>
<text x="531.2" y="676.2" fill="#e0a000" font-size="10" text-anchor="end" >232/27</text>
<text x="589.5" y="676.2" fill="#fff" font-size="10" text-anchor="end" >182/12</text>
<text x="303.7" y="687" fill="#fff" font-size="10" text-anchor="start" >Eff Shear (EBWD)</text>
<text x="472.6" y="687" fill="#fff" font-size="10" text-anchor="end" >--</text>
<text x="531.2" y="687" fill="#fff" font-size="10" text-anchor="end" >--/--</text>
<text x="589.5" y="687" fill="#fff" font-size="10" text-anchor="end" >--/--</text>
<text x="303.7" y="703.2" fill="#fff" font-size="10" text-anchor="start" >BRN Shear =</text>
<text x="472.6" y="703.2" fill="#fff" font-size="10" text-anchor="end" >87 m2/s2</text>
<text x="303.7" y="714.3" fill="#fff" font-size="10" text-anchor="start" >4-6km SR Wind =</text>
<text x="472.6" y="714.3" fill="#fff" font-size="10" text-anchor="end" >218/16 kt</text>
<text x="303.7" y="730" fill="#fff" font-size="10" text-anchor="start" >...Storm Motion Vectors...</text>
<text x="303.7" y="741.3" fill="#ff6a6a" font-size="10" text-anchor="start" >Bunkers Right =</text>
<text x="472.6" y="741.3" fill="#ff6a6a" font-size="10" text-anchor="end" >257/21 kt</text>
<text x="303.7" y="751.9" fill="#20a8e8" font-size="10" text-anchor="start" >Bunkers Left =</text>
<text x="472.6" y="751.9" fill="#20a8e8" font-size="10" text-anchor="end" >191/30 kt</text>
<text x="303.7" y="763.2" fill="#fff" font-size="10" text-anchor="start" >Corfidi Downshear =</text>
<text x="472.6" y="763.2" fill="#fff" font-size="10" text-anchor="end" >239/84 kt</text>
<text x="303.7" y="774.2" fill="#fff" font-size="10" text-anchor="start" >Corfidi Upshear =</text>
<text x="472.6" y="774.2" fill="#fff" font-size="10" text-anchor="end" >249/44 kt</text>
<path d="M532.4,725L512.4,739.1L506.2,731.2L516.2,735.8M515.3,735L510.4,727.5" stroke="#e84818" stroke-width="1.2" fill="none"/>
<path d="M532.4,725L541.5,747.4L532,751.5M539.8,745.3L530.3,748.6" stroke="#18e018" stroke-width="1.2" fill="none"/>
<text x="531.7" y="762.2" fill="#fff" font-size="10" text-anchor="middle" >1km &amp; 6km AGL</text>
<text x="531.7" y="773.2" fill="#fff" font-size="10" text-anchor="middle" >Wind Barbs</text>
</g>
<line x1="591" y1="614.2" x2="883.5" y2="614.2" stroke="#fff" stroke-width="1.5" />
<line x1="738.5" y1="614.2" x2="738.5" y2="780" stroke="#fff" stroke-width="1.5" />
<text x="737.7" y="607" fill="#fff" font-size="16" text-anchor="middle" textLength="259.8" lengthAdjust="spacingAndGlyphs" >SARS - Sounding Analogue System</text>
<text x="664" y="630.8" fill="#fff" font-size="14" text-anchor="middle" textLength="81" lengthAdjust="spacingAndGlyphs" >SUPERCELL</text>
<text x="810.6" y="630.8" fill="#fff" font-size="14" text-anchor="middle" textLength="89.4" lengthAdjust="spacingAndGlyphs" >SEVERE HAIL</text>
<text x="664" y="675.5" fill="#e8c000" font-size="10" text-anchor="middle" >No Quality Matches</text>
<text x="810.6" y="675.5" fill="#e8c000" font-size="10" text-anchor="middle" >No Quality Matches</text>
<text x="1030.4" y="602.8" fill="#fff" font-size="13" text-anchor="middle" textLength="169.3" lengthAdjust="spacingAndGlyphs" >Effective Layer STP (with CIN)</text>
<line x1="885.5" y1="749.1" x2="1177" y2="749.1" stroke="#4e4e4e" stroke-width="1.3" stroke-dasharray="3.5 2.5"/>
<line x1="885.5" y1="735.4" x2="1177" y2="735.4" stroke="#4e4e4e" stroke-width="1.3" stroke-dasharray="3.5 2.5"/>
<line x1="885.5" y1="721.6" x2="1177" y2="721.6" stroke="#4e4e4e" stroke-width="1.3" stroke-dasharray="3.5 2.5"/>
<line x1="885.5" y1="707.9" x2="1177" y2="707.9" stroke="#4e4e4e" stroke-width="1.3" stroke-dasharray="3.5 2.5"/>
<line x1="885.5" y1="694.2" x2="1177" y2="694.2" stroke="#4e4e4e" stroke-width="1.3" stroke-dasharray="3.5 2.5"/>
<line x1="885.5" y1="680.5" x2="1177" y2="680.5" stroke="#4e4e4e" stroke-width="1.3" stroke-dasharray="3.5 2.5"/>
<line x1="885.5" y1="666.8" x2="1177" y2="666.8" stroke="#4e4e4e" stroke-width="1.3" stroke-dasharray="3.5 2.5"/>
<line x1="885.5" y1="653" x2="1177" y2="653" stroke="#4e4e4e" stroke-width="1.3" stroke-dasharray="3.5 2.5"/>
<line x1="885.5" y1="639.3" x2="1177" y2="639.3" stroke="#4e4e4e" stroke-width="1.3" stroke-dasharray="3.5 2.5"/>
<line x1="885.5" y1="625.6" x2="1177" y2="625.6" stroke="#4e4e4e" stroke-width="1.3" stroke-dasharray="3.5 2.5"/>
<line x1="885.5" y1="611.9" x2="1177" y2="611.9" stroke="#4e4e4e" stroke-width="1.3" stroke-dasharray="3.5 2.5"/>
<line x1="885" y1="762.8" x2="1177" y2="762.8" stroke="#00d8e0" stroke-width="2" />
<text x="897.8" y="766.8" fill="#fff" font-size="11" text-anchor="end" >0</text>
<text x="897.8" y="753.1" fill="#fff" font-size="11" text-anchor="end" >1</text>
<text x="897.8" y="739.4" fill="#fff" font-size="11" text-anchor="end" >2</text>
<text x="897.8" y="725.6" fill="#fff" font-size="11" text-anchor="end" >3</text>
<text x="897.8" y="711.9" fill="#fff" font-size="11" text-anchor="end" >4</text>
<text x="897.8" y="698.2" fill="#fff" font-size="11" text-anchor="end" >5</text>
<text x="897.8" y="684.5" fill="#fff" font-size="11" text-anchor="end" >6</text>
<text x="897.8" y="670.8" fill="#fff" font-size="11" text-anchor="end" >7</text>
<text x="897.8" y="657" fill="#fff" font-size="11" text-anchor="end" >8</text>
<text x="897.8" y="643.3" fill="#fff" font-size="11" text-anchor="end" >9</text>
<text x="897.8" y="629.6" fill="#fff" font-size="11" text-anchor="end" >10</text>
<text x="897.8" y="615.9" fill="#fff" font-size="11" text-anchor="end" >11</text>
<line x1="926.2" y1="611.1" x2="926.2" y2="648.7" stroke="#ff00ff" stroke-width="2" />
<line x1="926.2" y1="727.3" x2="926.2" y2="746.7" stroke="#ff00ff" stroke-width="2" />
<rect x="915.4" y="648.7" width="21.6" height="78.6" fill="none" stroke="#ff00ff" stroke-width="2" />
<line x1="915.4" y1="689.7" x2="937" y2="689.7" stroke="#ff00ff" stroke-width="2" />
<line x1="968.5" y1="646.1" x2="968.5" y2="700.6" stroke="#ff0000" stroke-width="2" />
<line x1="968.5" y1="749" x2="968.5" y2="760.7" stroke="#ff0000" stroke-width="2" />
<rect x="957.7" y="700.6" width="21.6" height="48.4" fill="none" stroke="#ff0000" stroke-width="2" />
<line x1="957.7" y1="729.6" x2="979.3" y2="729.6" stroke="#ff0000" stroke-width="2" />
<line x1="1010.5" y1="685" x2="1010.5" y2="711.7" stroke="#ff8000" stroke-width="2" />
<line x1="1010.5" y1="753.7" x2="1010.5" y2="762.8" stroke="#ff8000" stroke-width="2" />
<rect x="999.7" y="711.7" width="21.6" height="42" fill="none" stroke="#ff8000" stroke-width="2" />
<line x1="999.7" y1="739.2" x2="1021.3" y2="739.2" stroke="#ff8000" stroke-width="2" />
<line x1="1051.5" y1="699.8" x2="1051.5" y2="726.7" stroke="#ffff00" stroke-width="2" />
<line x1="1051.5" y1="758.4" x2="1051.5" y2="762.8" stroke="#ffff00" stroke-width="2" />
<rect x="1040.7" y="726.7" width="21.6" height="31.7" fill="none" stroke="#ffff00" stroke-width="2" />
<line x1="1040.7" y1="745.4" x2="1062.3" y2="745.4" stroke="#ffff00" stroke-width="2" />
<line x1="1093.5" y1="711.4" x2="1093.5" y2="734.8" stroke="#ffff00" stroke-width="2" />
<line x1="1093.5" y1="760.7" x2="1093.5" y2="762.8" stroke="#ffff00" stroke-width="2" />
<rect x="1082.7" y="734.8" width="21.6" height="25.9" fill="none" stroke="#ffff00" stroke-width="2" />
<line x1="1082.7" y1="751.6" x2="1104.3" y2="751.6" stroke="#ffff00" stroke-width="2" />
<line x1="1135.4" y1="738.2" x2="1135.4" y2="752.4" stroke="#00ff00" stroke-width="2" />
<line x1="1135.4" y1="761.5" x2="1135.4" y2="762.8" stroke="#00ff00" stroke-width="2" />
<rect x="1124.6" y="752.4" width="21.6" height="9.1" fill="none" stroke="#00ff00" stroke-width="2" />
<line x1="1124.6" y1="759.4" x2="1146.2" y2="759.4" stroke="#00ff00" stroke-width="2" />
<text x="926.1" y="775.5" fill="#fff" font-size="10.5" text-anchor="middle" >EF4+</text>
<text x="968.2" y="775.5" fill="#fff" font-size="10.5" text-anchor="middle" >EF3</text>
<text x="1010.2" y="775.5" fill="#fff" font-size="10.5" text-anchor="middle" >EF2</text>
<text x="1051.1" y="775.5" fill="#fff" font-size="10.5" text-anchor="middle" >EF1</text>
<text x="1093.1" y="775.5" fill="#fff" font-size="10.5" text-anchor="middle" >EF0</text>
<text x="1135.9" y="775.5" fill="#fff" font-size="10.5" text-anchor="middle" >NONTOR</text>
<rect x="1031.2" y="612.4" width="142" height="83" fill="#000" stroke="#fff" stroke-width="2" />
<line x1="1031" y1="624.6" x2="1174" y2="624.6" stroke="#fff" stroke-width="2" />
<clipPath id="pclip"><rect x="1032" y="613" width="140" height="10.8"/></clipPath>
<text x="1034.3" y="624" fill="#fff" font-size="10" text-anchor="start" clip-path="url(#pclip)">Prob EF2+ Given Supercell</text>
<text x="1033.7" y="635.5" fill="#fff" font-size="10" text-anchor="start" >based on CAPE:</text>
<text x="1137.5" y="635.5" fill="#fff" font-size="10" text-anchor="start" >0.0</text>
<text x="1033.7" y="646.5" fill="#ff20ff" font-size="10" text-anchor="start" >based on LCL:</text>
<text x="1137.5" y="646.5" fill="#ff20ff" font-size="10" text-anchor="start" >0.19</text>
<text x="1033.7" y="657.5" fill="#fff" font-size="10" text-anchor="start" >based on ESRH:</text>
<text x="1137.5" y="657.5" fill="#fff" font-size="10" text-anchor="start" >--</text>
<text x="1033.7" y="668.4" fill="#fff" font-size="10" text-anchor="start" >based on EBWD:</text>
<text x="1137.5" y="668.4" fill="#fff" font-size="10" text-anchor="start" >--</text>
<text x="1033.7" y="679.4" fill="#fff" font-size="10" text-anchor="start" >based on STPC:</text>
<text x="1137.5" y="679.4" fill="#fff" font-size="10" text-anchor="start" >0.06</text>
<text x="1033.7" y="690.4" fill="#fff" font-size="10" text-anchor="start" >based on STP_fixed:</text>
<text x="1137.5" y="690.4" fill="#fff" font-size="10" text-anchor="start" >0.05</text>
</svg></body></html>
